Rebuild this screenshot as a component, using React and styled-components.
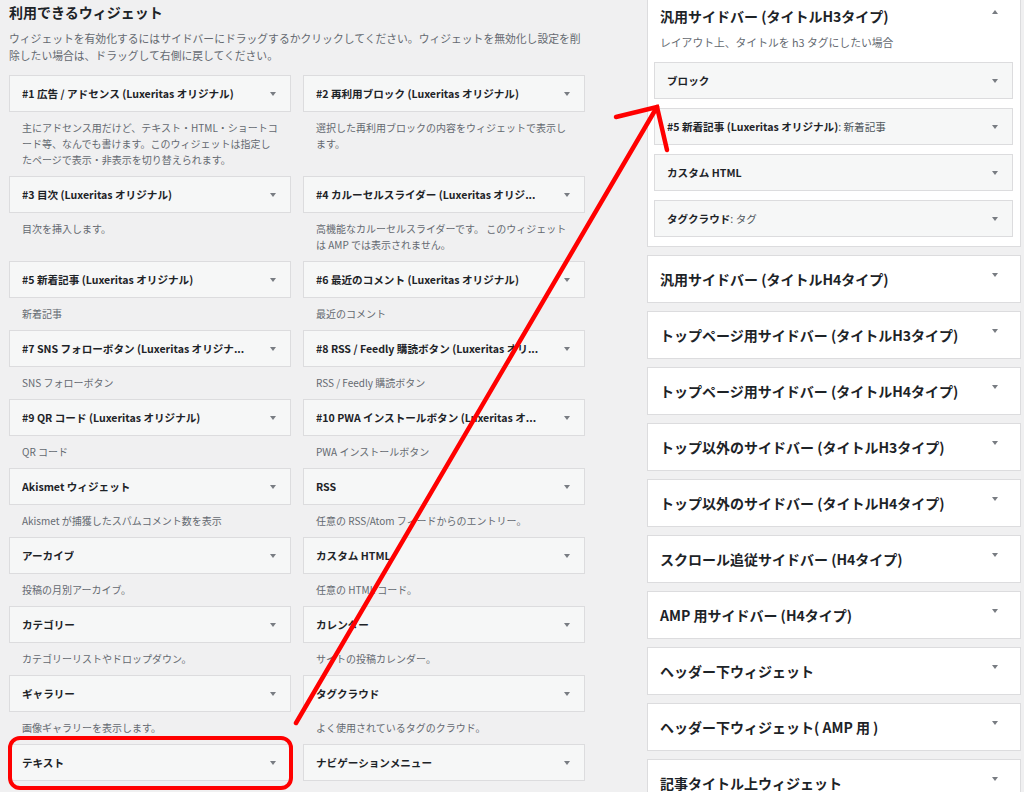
import React from 'react';
import styled, { createGlobalStyle } from 'styled-components';

const Global = createGlobalStyle`
  html, body { margin: 0; padding: 0; background: #f0f0f1; }
  body {
    font-family: "Noto Sans CJK JP", "Noto Sans", sans-serif;
    color: #1d2327;
    overflow: hidden;
  }
  * { box-sizing: border-box; }
`;

const Page = styled.div`
  position: relative;
  width: 1024px;
  height: 792px;
  overflow: hidden;
  display: flex;
  align-items: flex-start;
  gap: 62px;
  padding-left: 9px;
`;

const Available = styled.section`
  width: 576px;
  flex-shrink: 0;
`;

const Heading = styled.h2`
  margin: 2px 0 0;
  font-size: 14px;
  line-height: 20px;
  font-weight: 700;
  color: #1d2327;
`;

const Intro = styled.p`
  margin: 8px 0 11px;
  font-size: 10.8px;
  line-height: 17px;
  color: #646970;
  white-space: nowrap;
`;

const WidgetGrid = styled.div`
  display: grid;
  grid-template-columns: 282px 282px;
  column-gap: 12px;
`;

const WidgetCell = styled.div`
  display: flex;
  flex-direction: column;
`;

const WidgetBar = styled.div`
  height: 37px;
  border: 1px solid #dcdcde;
  background: #f6f7f7;
  display: flex;
  align-items: center;
  justify-content: space-between;
  gap: 8px;
  padding: 0 14px 0 12px;
  flex-shrink: 0;
`;

const WidgetTitle = styled.span`
  font-size: 10.6px;
  font-weight: 700;
  white-space: nowrap;
  overflow: hidden;
  color: #1d2327;
`;

const InWidgetTitle = styled.span`
  font-weight: 400;
  color: #50575e;
`;

const Caret = styled.span`
  flex-shrink: 0;
  width: 0;
  height: 0;
  border-left: 3.5px solid transparent;
  border-right: 3.5px solid transparent;
  ${(p) =>
    p.$up
      ? 'border-bottom: 4.5px solid #787c82;'
      : 'border-top: 4.5px solid #787c82;'}
  margin-bottom: ${(p) => (p.$raised ? '8px' : '0')};
`;

const WidgetDesc = styled.p`
  margin: 0;
  padding: 8px 13px 8px;
  font-size: 10px;
  line-height: 16px;
  color: #646970;
  white-space: nowrap;
`;

const Sidebars = styled.section`
  width: 374px;
  flex-shrink: 0;
  display: flex;
  flex-direction: column;
  gap: 8px;
  margin-top: -1px;
`;

const SidebarPanel = styled.div`
  background: #fff;
  border: 1px solid #dcdcde;
  flex-shrink: 0;
  ${(p) => (p.$open ? '' : 'height: 48px;')}
`;

const SidebarHead = styled.div`
  display: flex;
  align-items: center;
  justify-content: space-between;
  height: ${(p) => (p.$open ? '32px' : '46px')};
  padding: 0 22px 0 12px;
`;

const SidebarTitle = styled.h3`
  margin: 0;
  font-size: 14px;
  font-weight: 700;
  color: #1d2327;
  white-space: nowrap;
`;

const SidebarDesc = styled.p`
  margin: 2px 0 0;
  padding: 0 12px;
  font-size: 10.8px;
  line-height: 16px;
  color: #646970;
`;

const SidebarWidgets = styled.div`
  display: flex;
  flex-direction: column;
  gap: 9px;
  padding: 12px 7px 9px 6px;
`;

const Annotation = styled.svg`
  position: absolute;
  left: 0;
  top: 0;
  pointer-events: none;
`;

const widgets = [
  ['#1 広告 / アドセンス (Luxeritas オリジナル)', ['主にアドセンス用だけど、テキスト・HTML・ショートコ', 'ード等、なんでも書けます。このウィジェットは指定し', 'たページで表示・非表示を切り替えられます。']],
  ['#2 再利用ブロック (Luxeritas オリジナル)', ['選択した再利用ブロックの内容をウィジェットで表示し', 'ます。']],
  ['#3 目次 (Luxeritas オリジナル)', ['目次を挿入します。']],
  ['#4 カルーセルスライダー (Luxeritas オリジ...', ['高機能なカルーセルスライダーです。 このウィジェット', 'は AMP では表示されません。']],
  ['#5 新着記事 (Luxeritas オリジナル)', ['新着記事']],
  ['#6 最近のコメント (Luxeritas オリジナル)', ['最近のコメント']],
  ['#7 SNS フォローボタン (Luxeritas オリジナ...', ['SNS フォローボタン']],
  ['#8 RSS / Feedly 購読ボタン (Luxeritas オリ...', ['RSS / Feedly 購読ボタン']],
  ['#9 QR コード (Luxeritas オリジナル)', ['QR コード']],
  ['#10 PWA インストールボタン (Luxeritas オ...', ['PWA インストールボタン']],
  ['Akismet ウィジェット', ['Akismet が捕獲したスパムコメント数を表示']],
  ['RSS', ['任意の RSS/Atom フィードからのエントリー。']],
  ['アーカイブ', ['投稿の月別アーカイブ。']],
  ['カスタム HTML', ['任意の HTML コード。']],
  ['カテゴリー', ['カテゴリーリストやドロップダウン。']],
  ['カレンダー', ['サイトの投稿カレンダー。']],
  ['ギャラリー', ['画像ギャラリーを表示します。']],
  ['タグクラウド', ['よく使用されているタグのクラウド。']],
  ['テキスト', []],
  ['ナビゲーションメニュー', []],
];

const openWidgets = [
  ['ブロック', null],
  ['#5 新着記事 (Luxeritas オリジナル)', ': 新着記事'],
  ['カスタム HTML', null],
  ['タグクラウド', ': タグ'],
];

const closedSidebars = [
  '汎用サイドバー (タイトルH4タイプ)',
  'トップページ用サイドバー (タイトルH3タイプ)',
  'トップページ用サイドバー (タイトルH4タイプ)',
  'トップ以外のサイドバー (タイトルH3タイプ)',
  'トップ以外のサイドバー (タイトルH4タイプ)',
  'スクロール追従サイドバー (H4タイプ)',
  'AMP 用サイドバー (H4タイプ)',
  'ヘッダー下ウィジェット',
  'ヘッダー下ウィジェット( AMP 用 )',
  '記事タイトル上ウィジェット',
];

export default function App() {
  return (
    <>
      <Global />
      <Page>
        <Available>
          <Heading>利用できるウィジェット</Heading>
          <Intro>
            ウィジェットを有効化するにはサイドバーにドラッグするかクリックしてください。ウィジェットを無効化し設定を削
            <br />
            除したい場合は、ドラッグして右側に戻してください。
          </Intro>
          <WidgetGrid>
            {widgets.map(([title, desc]) => (
              <WidgetCell key={title}>
                <WidgetBar>
                  <WidgetTitle>{title}</WidgetTitle>
                  <Caret />
                </WidgetBar>
                {desc.length > 0 && (
                  <WidgetDesc>
                    {desc.map((line, i) => (
                      <React.Fragment key={i}>
                        {i > 0 && <br />}
                        {line}
                      </React.Fragment>
                    ))}
                  </WidgetDesc>
                )}
              </WidgetCell>
            ))}
          </WidgetGrid>
        </Available>

        <Sidebars>
          <SidebarPanel $open>
            <SidebarHead $open>
              <SidebarTitle>汎用サイドバー (タイトルH3タイプ)</SidebarTitle>
              <Caret $up $raised />
            </SidebarHead>
            <SidebarDesc>レイアウト上、タイトルを h3 タグにしたい場合</SidebarDesc>
            <SidebarWidgets>
              {openWidgets.map(([title, extra]) => (
                <WidgetBar key={title}>
                  <WidgetTitle>
                    {title}
                    {extra && <InWidgetTitle>{extra}</InWidgetTitle>}
                  </WidgetTitle>
                  <Caret />
                </WidgetBar>
              ))}
            </SidebarWidgets>
          </SidebarPanel>
          {closedSidebars.map((name) => (
            <SidebarPanel key={name}>
              <SidebarHead>
                <SidebarTitle>{name}</SidebarTitle>
                <Caret $raised />
              </SidebarHead>
            </SidebarPanel>
          ))}
        </Sidebars>

        <Annotation width="1024" height="792" viewBox="0 0 1024 792">
          <rect x="10" y="738" width="281" height="50" rx="10" ry="10" fill="none" stroke="#ff0000" strokeWidth="4" />
          <line x1="296" y1="723" x2="657" y2="107" stroke="#ff0000" strokeWidth="4.5" strokeLinecap="round" />
          <polyline points="616,117 657,107 667,150" fill="none" stroke="#ff0000" strokeWidth="4.5" strokeLinecap="round" strokeLinejoin="miter" />
        </Annotation>
      </Page>
    </>
  );
}
